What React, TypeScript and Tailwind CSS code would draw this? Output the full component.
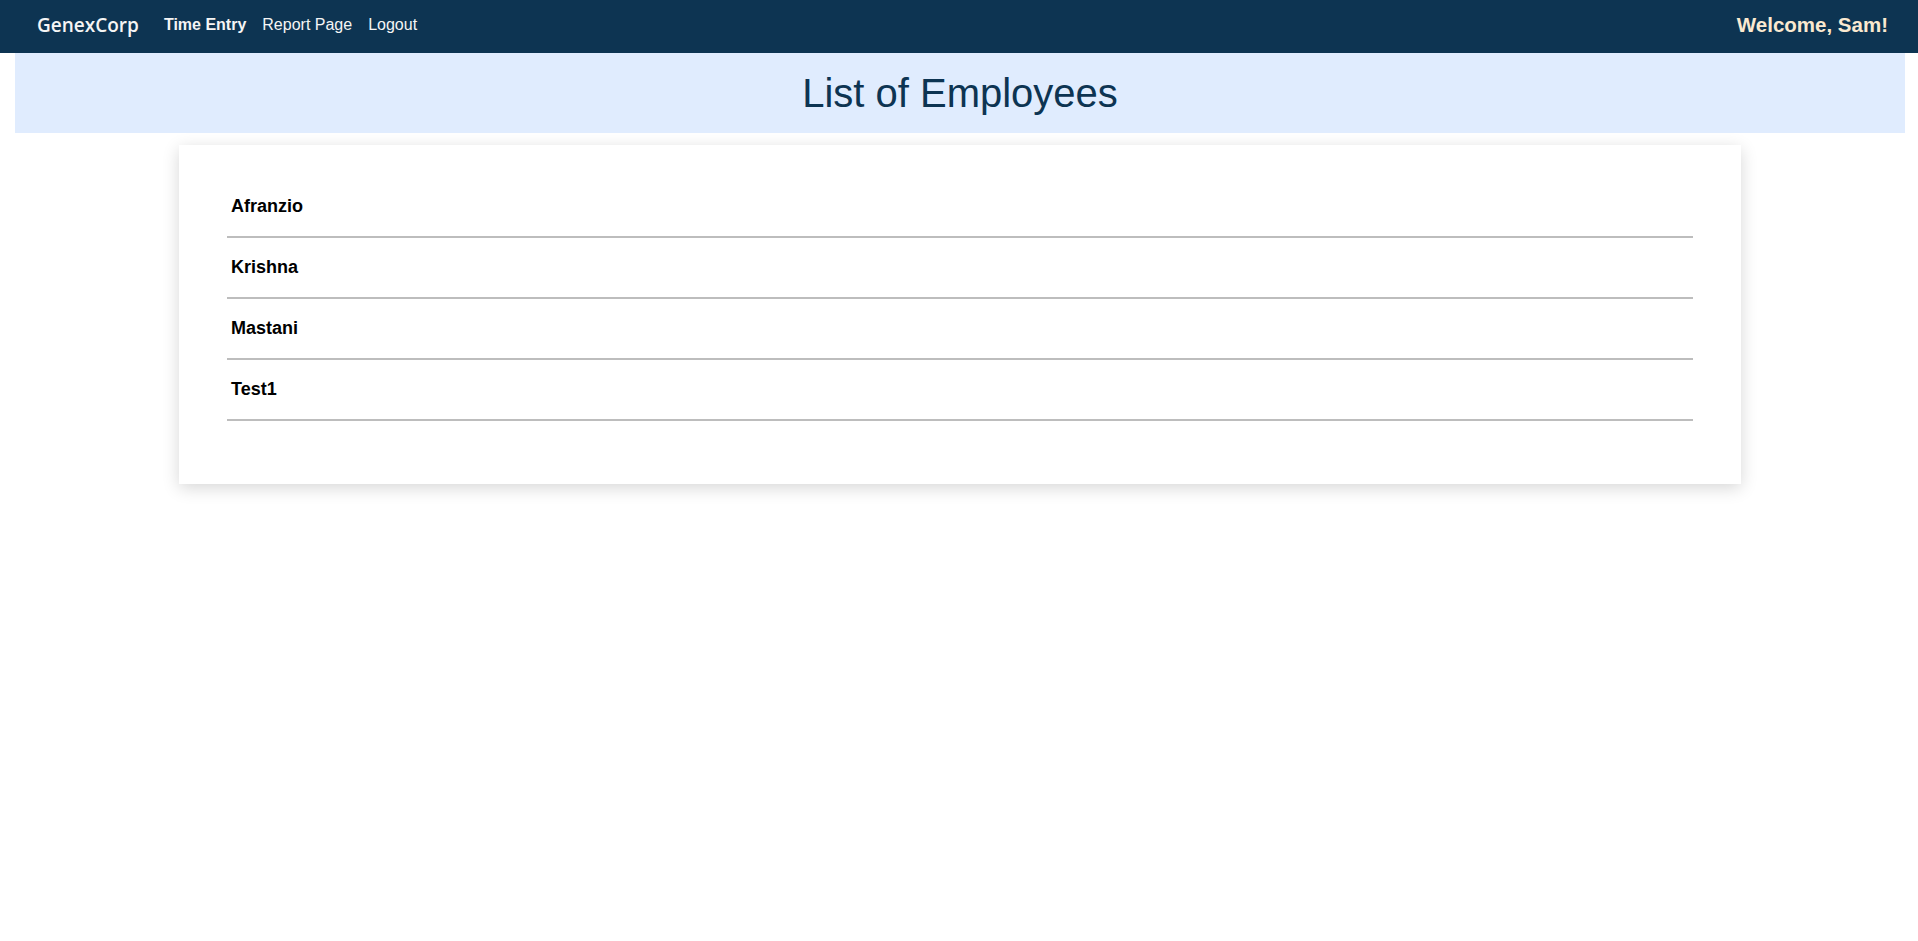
import React from 'react';

const EMPLOYEES = ['Afranzio', 'Krishna', 'Mastani', 'Test1'];

export default function App() {
  return (
    <div className="min-h-screen bg-white font-['Liberation_Sans',Arial,sans-serif]">
      {/* Navbar */}
      <nav className="h-[53px] bg-[#0d3452] flex items-center justify-between pl-[37px] pr-[30px] pb-[3px]">
        <div className="flex items-center">
          <span className="font-['Open_Sans',sans-serif] font-semibold text-[19px] text-[#f5f5f5] mr-[25px]">GenexCorp</span>
          <div className="flex items-center gap-4 text-[16px] text-[#f5f5f5]">
            <a className="font-bold">Time Entry</a>
            <a>Report Page</a>
            <a>Logout</a>
          </div>
        </div>
        <span className="text-[20.5px] font-bold text-[#fbe9d0]">Welcome, Sam!</span>
      </nav>

      {/* Page title */}
      <div className="ml-[15px] mr-[13px] h-[80px] bg-[#e0ecfe] flex items-center justify-center">
        <h1 className="text-[40px] text-[#0d3452]">List of Employees</h1>
      </div>

      {/* Employee list */}
      <div className="pl-[2px]">
        <div className="w-[1562px] mx-auto mt-3 bg-white shadow-[0_4px_16px_rgba(0,0,0,0.16)] px-12 pt-8 pb-[63px]">
          <ul>
            {EMPLOYEES.map((name) => (
              <li key={name} className="border-b-2 border-[#bdbdbd] pl-1 pt-[19px] pb-[19px] text-[18px] leading-[21px] font-bold text-black">
                {name}
              </li>
            ))}
          </ul>
        </div>
      </div>
    </div>
  );
}
